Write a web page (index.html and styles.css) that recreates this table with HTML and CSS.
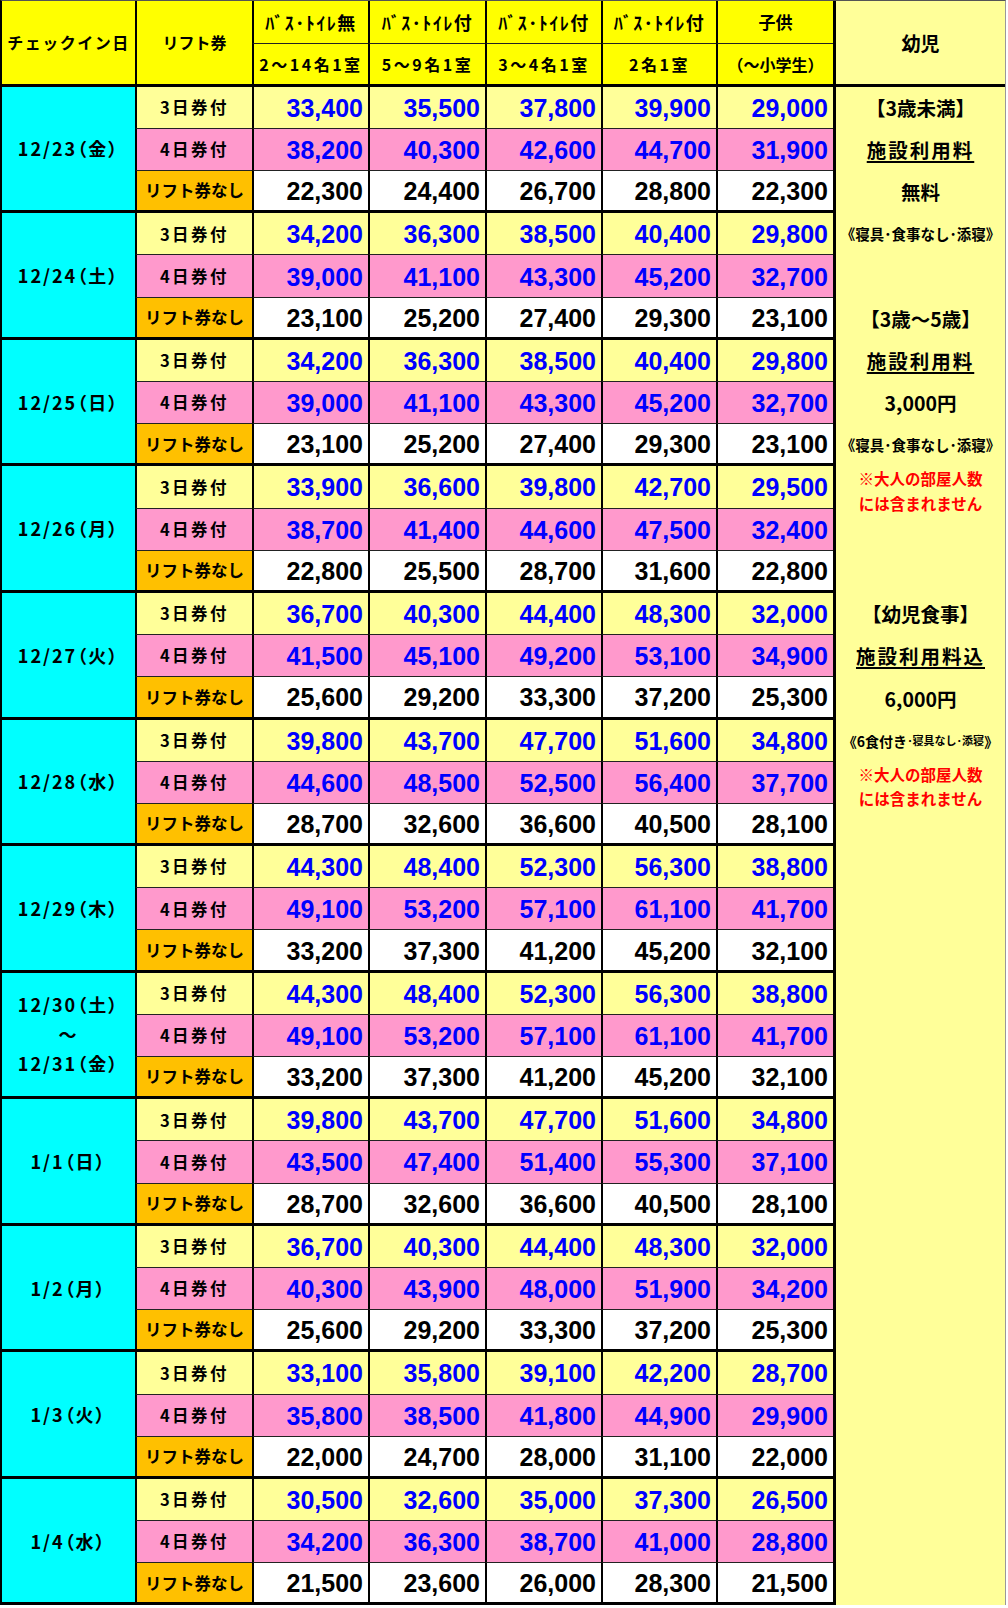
FILE: index.html
```html
<!DOCTYPE html>
<html lang="ja">
<head>
<meta charset="utf-8">
<title>料金表</title>
<link rel="stylesheet" href="styles.css">
</head>
<body>
<div class="sheet">
  <div class="h hc span2">チェックイン日</div>
  <div class="h hl span2">リフト券</div>
  <div class="h ht kana">ﾊﾞｽ･ﾄｲﾚ無</div>
  <div class="h ht kana">ﾊﾞｽ･ﾄｲﾚ付</div>
  <div class="h ht kana">ﾊﾞｽ･ﾄｲﾚ付</div>
  <div class="h ht kana">ﾊﾞｽ･ﾄｲﾚ付</div>
  <div class="h ht">子供</div>
  <div class="h hy span2">幼児</div>
  <div class="h hb sp">2～14名1室</div>
  <div class="h hb sp">5～9名1室</div>
  <div class="h hb sp">3～4名1室</div>
  <div class="h hb sp">2名1室</div>
  <div class="h hb">（～小学生）</div>

  <div class="ycol"></div>
  <div class="yt g3 big">【3歳未満】</div>
  <div class="yt g4 big ul">施設利用料</div>
  <div class="yt g5 big">無料</div>
  <div class="yt g6 note">《寝具･食事なし･添寝》</div>
  <div class="yt g8 big">【3歳～5歳】</div>
  <div class="yt g9 big ul">施設利用料</div>
  <div class="yt g10 big">3,000円</div>
  <div class="yt g11 note">《寝具･食事なし･添寝》</div>
  <div class="yt g12 red">※大人の部屋人数<br>には含まれません</div>
  <div class="yt g15 big">【幼児食事】</div>
  <div class="yt g16 big ul">施設利用料込</div>
  <div class="yt g17 big">6,000円</div>
  <div class="yt g18 note"><span class="nl">《6食付き</span><span class="ns">･寝具なし･添寝</span><span class="nl">》</span></div>
  <div class="yt g19 red">※大人の部屋人数<br>には含まれません</div>

  <div class="d">12/23（金）</div>
  <div class="l a">3日券付</div><div class="n a">33,400</div><div class="n a">35,500</div><div class="n a">37,800</div><div class="n a">39,900</div><div class="n a">29,000</div>
  <div class="l b">4日券付</div><div class="n b">38,200</div><div class="n b">40,300</div><div class="n b">42,600</div><div class="n b">44,700</div><div class="n b">31,900</div>
  <div class="l c">リフト券なし</div><div class="n c">22,300</div><div class="n c">24,400</div><div class="n c">26,700</div><div class="n c">28,800</div><div class="n c">22,300</div>

  <div class="d">12/24（土）</div>
  <div class="l a">3日券付</div><div class="n a">34,200</div><div class="n a">36,300</div><div class="n a">38,500</div><div class="n a">40,400</div><div class="n a">29,800</div>
  <div class="l b">4日券付</div><div class="n b">39,000</div><div class="n b">41,100</div><div class="n b">43,300</div><div class="n b">45,200</div><div class="n b">32,700</div>
  <div class="l c">リフト券なし</div><div class="n c">23,100</div><div class="n c">25,200</div><div class="n c">27,400</div><div class="n c">29,300</div><div class="n c">23,100</div>

  <div class="d">12/25（日）</div>
  <div class="l a">3日券付</div><div class="n a">34,200</div><div class="n a">36,300</div><div class="n a">38,500</div><div class="n a">40,400</div><div class="n a">29,800</div>
  <div class="l b">4日券付</div><div class="n b">39,000</div><div class="n b">41,100</div><div class="n b">43,300</div><div class="n b">45,200</div><div class="n b">32,700</div>
  <div class="l c">リフト券なし</div><div class="n c">23,100</div><div class="n c">25,200</div><div class="n c">27,400</div><div class="n c">29,300</div><div class="n c">23,100</div>

  <div class="d">12/26（月）</div>
  <div class="l a">3日券付</div><div class="n a">33,900</div><div class="n a">36,600</div><div class="n a">39,800</div><div class="n a">42,700</div><div class="n a">29,500</div>
  <div class="l b">4日券付</div><div class="n b">38,700</div><div class="n b">41,400</div><div class="n b">44,600</div><div class="n b">47,500</div><div class="n b">32,400</div>
  <div class="l c">リフト券なし</div><div class="n c">22,800</div><div class="n c">25,500</div><div class="n c">28,700</div><div class="n c">31,600</div><div class="n c">22,800</div>

  <div class="d">12/27（火）</div>
  <div class="l a">3日券付</div><div class="n a">36,700</div><div class="n a">40,300</div><div class="n a">44,400</div><div class="n a">48,300</div><div class="n a">32,000</div>
  <div class="l b">4日券付</div><div class="n b">41,500</div><div class="n b">45,100</div><div class="n b">49,200</div><div class="n b">53,100</div><div class="n b">34,900</div>
  <div class="l c">リフト券なし</div><div class="n c">25,600</div><div class="n c">29,200</div><div class="n c">33,300</div><div class="n c">37,200</div><div class="n c">25,300</div>

  <div class="d">12/28（水）</div>
  <div class="l a">3日券付</div><div class="n a">39,800</div><div class="n a">43,700</div><div class="n a">47,700</div><div class="n a">51,600</div><div class="n a">34,800</div>
  <div class="l b">4日券付</div><div class="n b">44,600</div><div class="n b">48,500</div><div class="n b">52,500</div><div class="n b">56,400</div><div class="n b">37,700</div>
  <div class="l c">リフト券なし</div><div class="n c">28,700</div><div class="n c">32,600</div><div class="n c">36,600</div><div class="n c">40,500</div><div class="n c">28,100</div>

  <div class="d">12/29（木）</div>
  <div class="l a">3日券付</div><div class="n a">44,300</div><div class="n a">48,400</div><div class="n a">52,300</div><div class="n a">56,300</div><div class="n a">38,800</div>
  <div class="l b">4日券付</div><div class="n b">49,100</div><div class="n b">53,200</div><div class="n b">57,100</div><div class="n b">61,100</div><div class="n b">41,700</div>
  <div class="l c">リフト券なし</div><div class="n c">33,200</div><div class="n c">37,300</div><div class="n c">41,200</div><div class="n c">45,200</div><div class="n c">32,100</div>

  <div class="d d3">12/30（土）<br>～<br>12/31（金）</div>
  <div class="l a">3日券付</div><div class="n a">44,300</div><div class="n a">48,400</div><div class="n a">52,300</div><div class="n a">56,300</div><div class="n a">38,800</div>
  <div class="l b">4日券付</div><div class="n b">49,100</div><div class="n b">53,200</div><div class="n b">57,100</div><div class="n b">61,100</div><div class="n b">41,700</div>
  <div class="l c">リフト券なし</div><div class="n c">33,200</div><div class="n c">37,300</div><div class="n c">41,200</div><div class="n c">45,200</div><div class="n c">32,100</div>

  <div class="d">1/1（日）</div>
  <div class="l a">3日券付</div><div class="n a">39,800</div><div class="n a">43,700</div><div class="n a">47,700</div><div class="n a">51,600</div><div class="n a">34,800</div>
  <div class="l b">4日券付</div><div class="n b">43,500</div><div class="n b">47,400</div><div class="n b">51,400</div><div class="n b">55,300</div><div class="n b">37,100</div>
  <div class="l c">リフト券なし</div><div class="n c">28,700</div><div class="n c">32,600</div><div class="n c">36,600</div><div class="n c">40,500</div><div class="n c">28,100</div>

  <div class="d">1/2（月）</div>
  <div class="l a">3日券付</div><div class="n a">36,700</div><div class="n a">40,300</div><div class="n a">44,400</div><div class="n a">48,300</div><div class="n a">32,000</div>
  <div class="l b">4日券付</div><div class="n b">40,300</div><div class="n b">43,900</div><div class="n b">48,000</div><div class="n b">51,900</div><div class="n b">34,200</div>
  <div class="l c">リフト券なし</div><div class="n c">25,600</div><div class="n c">29,200</div><div class="n c">33,300</div><div class="n c">37,200</div><div class="n c">25,300</div>

  <div class="d">1/3（火）</div>
  <div class="l a">3日券付</div><div class="n a">33,100</div><div class="n a">35,800</div><div class="n a">39,100</div><div class="n a">42,200</div><div class="n a">28,700</div>
  <div class="l b">4日券付</div><div class="n b">35,800</div><div class="n b">38,500</div><div class="n b">41,800</div><div class="n b">44,900</div><div class="n b">29,900</div>
  <div class="l c">リフト券なし</div><div class="n c">22,000</div><div class="n c">24,700</div><div class="n c">28,000</div><div class="n c">31,100</div><div class="n c">22,000</div>

  <div class="d">1/4（水）</div>
  <div class="l a">3日券付</div><div class="n a">30,500</div><div class="n a">32,600</div><div class="n a">35,000</div><div class="n a">37,300</div><div class="n a">26,500</div>
  <div class="l b">4日券付</div><div class="n b">34,200</div><div class="n b">36,300</div><div class="n b">38,700</div><div class="n b">41,000</div><div class="n b">28,800</div>
  <div class="l c">リフト券なし</div><div class="n c">21,500</div><div class="n c">23,600</div><div class="n c">26,000</div><div class="n c">28,300</div><div class="n c">21,500</div>
</div>
</body>
</html>
```

FILE: styles.css
```css
* { box-sizing: border-box; }

body {
  margin: 0;
  background: #ffffff;
  font-family: "Noto Sans CJK JP", "Noto Sans", sans-serif;
  font-weight: 700;
  color: #000;
}

.sheet {
  display: grid;
  width: 1006px;
  grid-template-columns: 133px 117px 116px 117px 116px 115px 117px 172px;
  grid-template-rows: 42.7px 43px repeat(36, 42.2px);
  border-left: 2px solid #000;
  border-top: 1px solid #555;
  border-right: 1px solid #999;
}

.sheet > div {
  display: flex;
  align-items: center;
  justify-content: center;
  white-space: nowrap;
  line-height: 1;
}

/* header */
.h {
  background: #ffff00;
  font-size: 16px;
}
.span2 { grid-row: span 2; }
.hc {
  grid-column: 1;
  border-bottom: 3px solid #000;
  letter-spacing: 1.5px;
  font-size: 16px;
}
.hl {
  border-left: 2px solid #000;
  border-bottom: 3px solid #000;
}
.ht {
  border-left: 2px solid #000;
  border-bottom: 1px solid #222;
  font-size: 17px;
}
.kana { letter-spacing: 1.5px; font-size: 18px; }
.hb {
  border-left: 2px solid #000;
  border-bottom: 3px solid #000;
}
.sp { letter-spacing: 2.5px; }
.hy {
  background: #ffff99;
  border-left: 3px solid #000;
  border-bottom: 3px solid #000;
  font-size: 19px;
  grid-column: 8;
}

/* infant column */
.ycol {
  grid-column: 8;
  grid-row: 3 / span 36;
  background: #ffff99;
  border-left: 3px solid #000;
}
.sheet > .yt {
  grid-column: 8;
  padding-left: 3px;
  position: relative;
}
.g3 { grid-row: 3; }
.g4 { grid-row: 4; }
.g5 { grid-row: 5; }
.g6 { grid-row: 6; }
.g8 { grid-row: 8; }
.g9 { grid-row: 9; }
.g10 { grid-row: 10; }
.g11 { grid-row: 11; }
.g12 { grid-row: 12 / span 2; }
.g15 { grid-row: 15; }
.g16 { grid-row: 16; }
.g17 { grid-row: 17; }
.g18 { grid-row: 18; }
.g19 { grid-row: 19 / span 2; }

.big { font-size: 19.5px; }
.ul {
  text-decoration: underline;
  text-underline-offset: 3px;
  text-decoration-thickness: 1.5px;
  letter-spacing: 2px;
}
.note { font-size: 14.5px; }
.nl { font-size: 14px; }
.ns { font-size: 11px; }
.sheet > .red {
  color: #ff0000;
  font-size: 15.5px;
  line-height: 24.5px;
  align-items: flex-start;
  text-align: center;
}

/* data */
.d {
  grid-column: 1;
  grid-row: span 3;
  background: #00ffff;
  border-bottom: 3px solid #000;
  font-size: 18px;
  letter-spacing: 2px;
  font-feature-settings: "palt";
}
.sheet > .d3 {
  line-height: 29.5px;
  text-align: center;
}

.l {
  border-left: 2px solid #000;
  font-size: 16.5px;
}
.l.a { letter-spacing: 2.5px; }
.l.b { letter-spacing: 2.5px; }

.n {
  border-left: 2px solid #000;
  font-family: "Liberation Sans", Arial, sans-serif;
  font-size: 25px;
  font-weight: 700;
}
.sheet > .n {
  justify-content: flex-end;
  padding-right: 5px;
  padding-top: 2px;
}

.a { background: #ffff99; border-bottom: 1px solid #222; }
.b { background: #ff99cc; border-bottom: 1px solid #222; }
.c { background: #ffffff; border-bottom: 3px solid #000; }
.l.c { background: #ffc000; }
.n.a, .n.b { color: #0000ff; }
.n.c { color: #000; }
```
